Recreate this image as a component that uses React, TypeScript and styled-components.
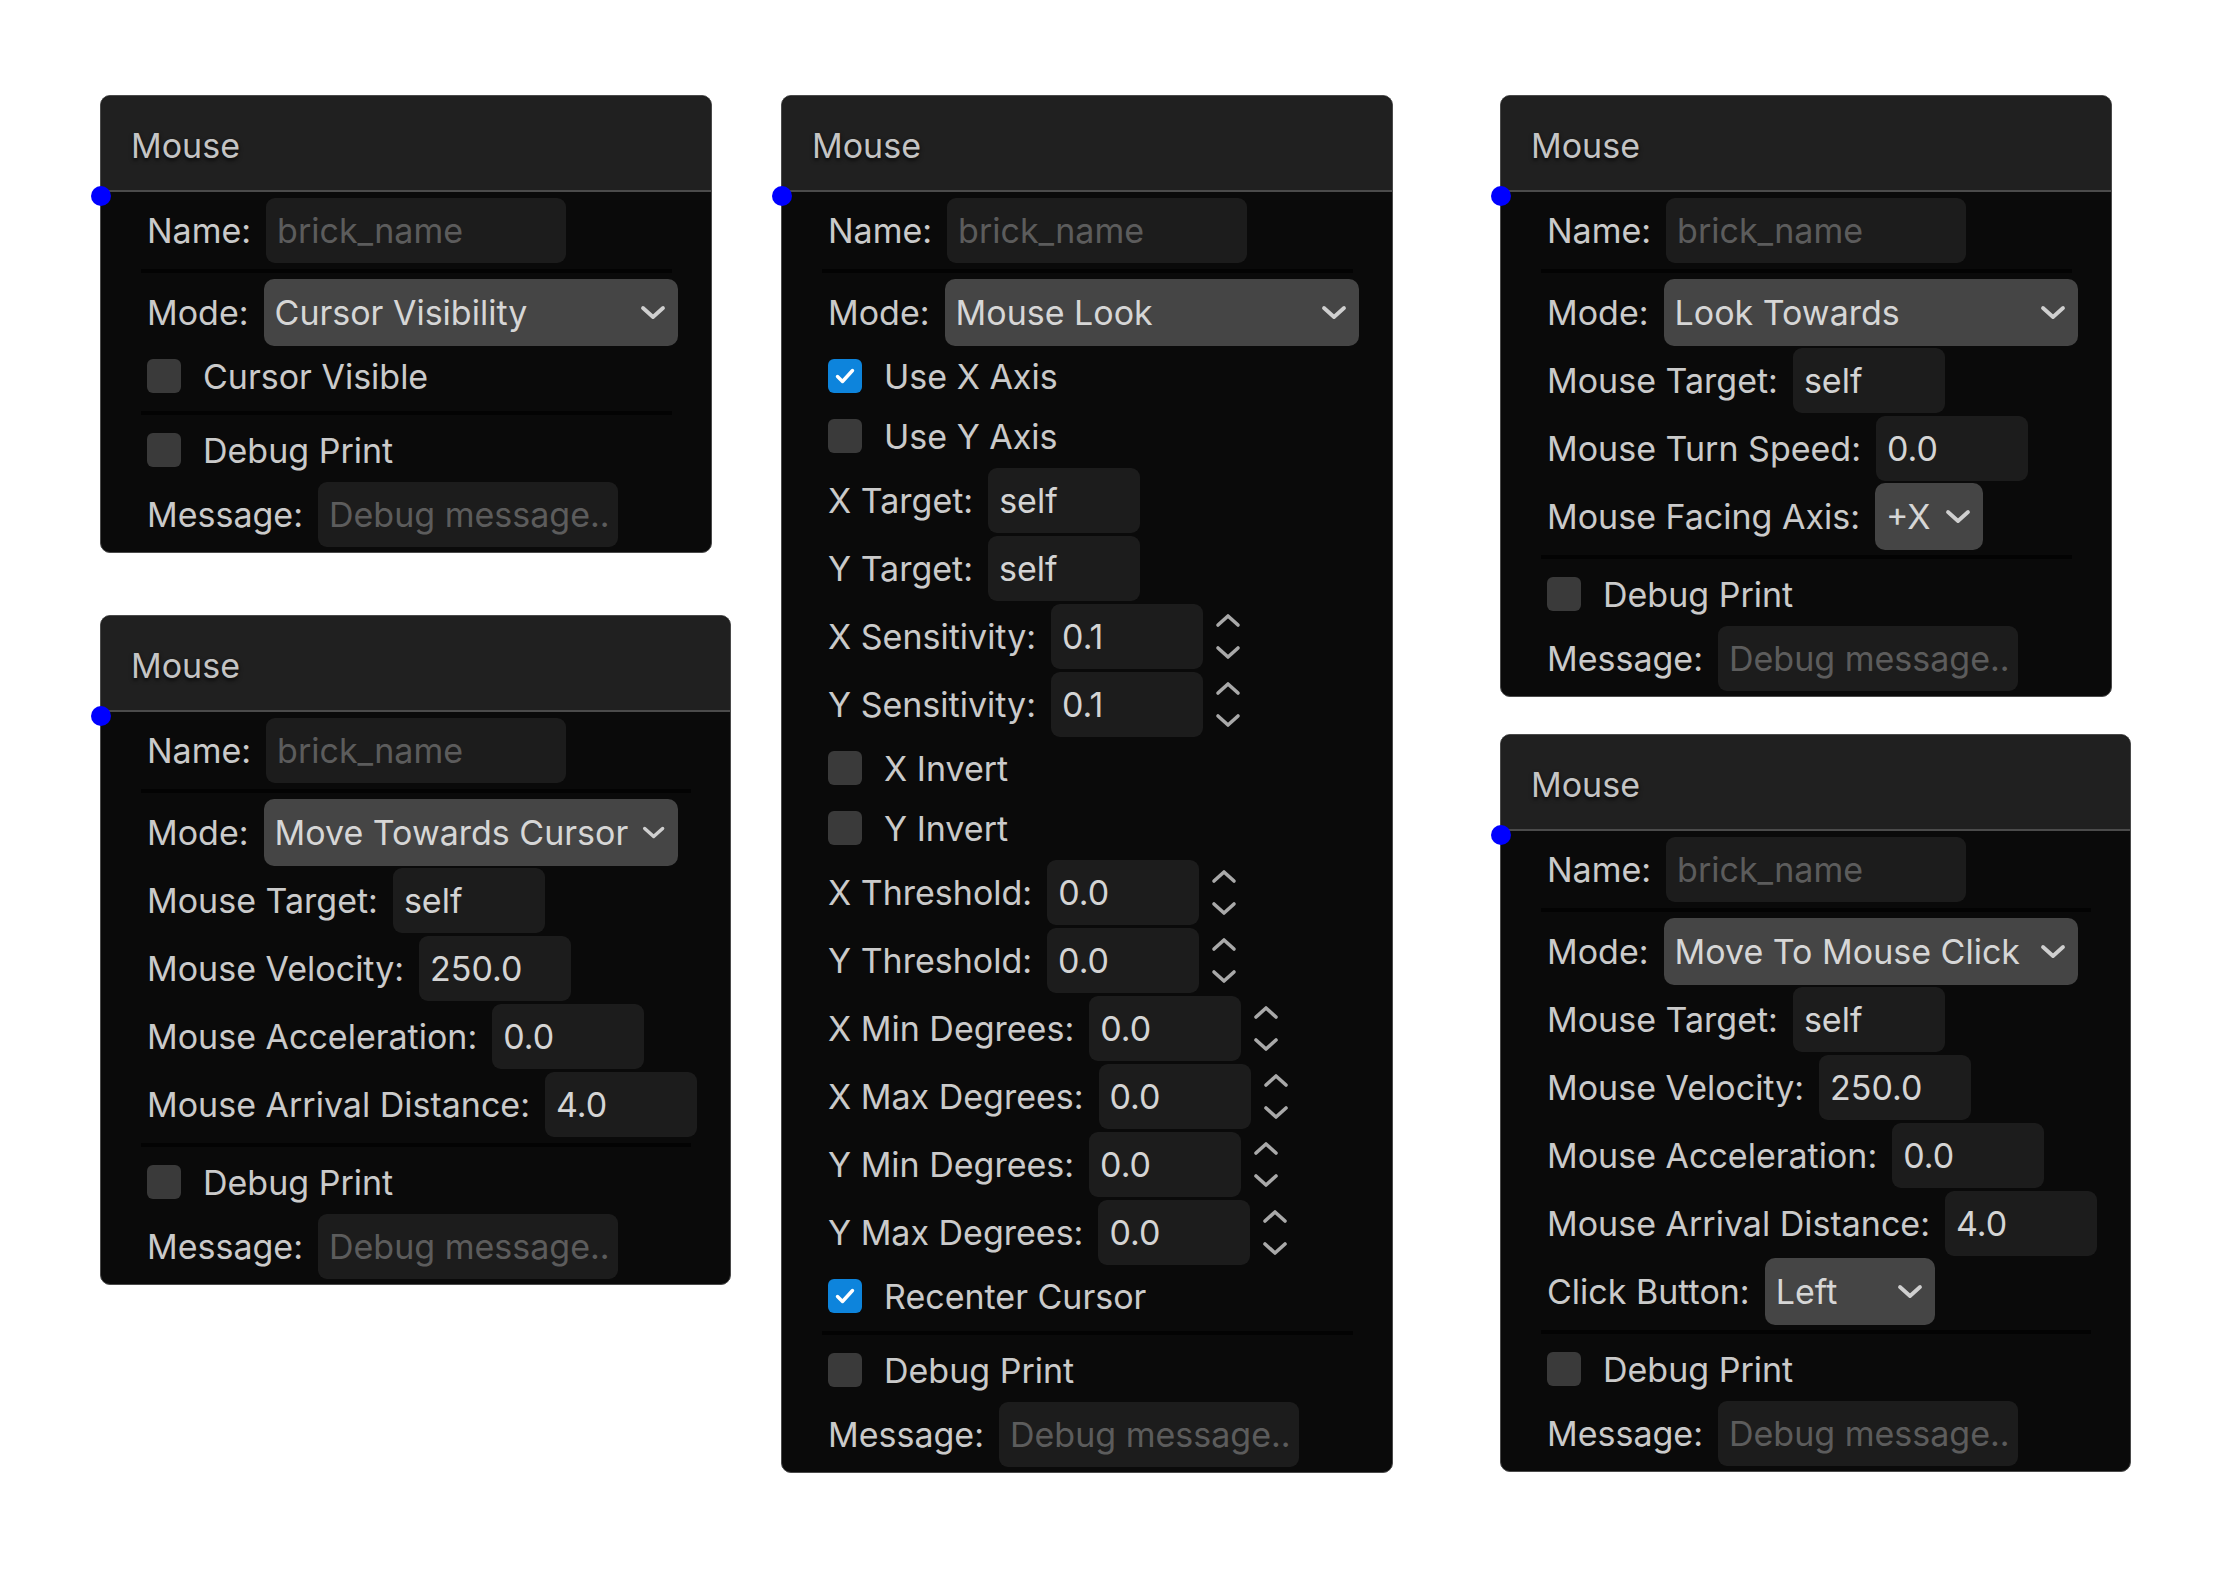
import styled, { createGlobalStyle } from "styled-components"

const GlobalStyle = createGlobalStyle`
    body {
        margin: 0;
        background: #ffffff;
        font-family: Inter, "Noto Sans", sans-serif;
    }
`

const Canvas = styled.div`
    display: grid;
    grid-template-columns: 681px 719px auto;
    align-items: start;
    padding: 95px 0 0 100px;
    min-height: 1576px;
    box-sizing: border-box;
`

const Column = styled.div<{ $gap: number }>`
    display: flex;
    flex-direction: column;
    align-items: flex-start;
    gap: ${p => p.$gap}px;
`

const Panel = styled.section`
    position: relative;
    width: fit-content;
    border: 1px solid #4a4a4a;
    border-radius: 10px;
    background: #0a0a0a;
`

// socket on the left edge of the brick
const Socket = styled.span`
    position: absolute;
    left: -10px;
    top: 90px;
    width: 20px;
    height: 20px;
    border-radius: 50%;
    background: #0000ff;
`

const Header = styled.header`
    height: 96px;
    box-sizing: border-box;
    display: flex;
    align-items: center;
    padding: 5px 30px 0;
    background: #202020;
    border-bottom: 2px solid #4b4b4b;
    border-radius: 9px 9px 0 0;
    color: #c4c4c4;
    font-size: 34px;
    text-shadow: 0 2px 4px rgba(0, 0, 0, 0.85);
`

const Body = styled.div`
    display: flex;
    flex-direction: column;
    padding: 4px 33px 4px 40px;
`

const Row = styled.div<{ $check?: boolean }>`
    display: flex;
    align-items: center;
    height: ${p => (p.$check ? 60 : 68)}px;
    padding-left: 6px;
    gap: ${p => (p.$check ? 22 : 15)}px;
`

const Divider = styled.hr`
    height: 4px;
    margin: 5px 6px 5px 0;
    border: none;
    background: #030303;
`

const Label = styled.span`
    color: #cacaca;
    font-size: 34px;
    white-space: nowrap;
`

const TextBox = styled.input<{ $w: number }>`
    width: ${p => p.$w}px;
    height: 65px;
    box-sizing: border-box;
    padding: 0 6px 0 11px;
    border: none;
    border-radius: 9px;
    background: #1c1c1c;
    color: #d4d4d4;
    font-family: inherit;
    font-size: 34px;
    outline: none;

    &::placeholder {
        color: #5c5c5c;
    }
`

const SelectBox = styled.div<{ $w?: number }>`
    width: ${p => (p.$w ? `${p.$w}px` : "auto")};
    height: 67px;
    box-sizing: border-box;
    display: flex;
    align-items: center;
    justify-content: space-between;
    gap: 14px;
    padding: 0 12px 0 11px;
    border-radius: 10px;
    background: #454545;
    color: #d6d6d6;
    font-size: 34px;
    white-space: nowrap;
`

const NumberField = styled.div`
    display: flex;
    align-items: center;
    gap: 12px;
`

const Spinner = styled.div`
    display: flex;
    flex-direction: column;
    gap: 17px;
`

const Box = styled.span<{ $on: boolean }>`
    width: 34px;
    height: 34px;
    flex-shrink: 0;
    display: flex;
    align-items: center;
    justify-content: center;
    border-radius: 6px;
    background: ${p => (p.$on ? "#0d84dc" : "#3a3a3a")};
`

const Chevron = () => (
    <svg width="26" height="15" viewBox="0 0 26 15">
        <path d="M3 3 L13 12 L23 3" fill="none" stroke="#cfcfcf" strokeWidth="3.8" strokeLinecap="round" strokeLinejoin="round" />
    </svg>
)

const Arrow = ({ up }: { up?: boolean }) => (
    <svg width="26" height="15" viewBox="0 0 26 15">
        <path d={up ? "M3 12 L13 3 L23 12" : "M3 3 L13 12 L23 3"} fill="none" stroke="#a9a9a9" strokeWidth="3.6" strokeLinecap="round" strokeLinejoin="round" />
    </svg>
)

type Field =
    | { kind: "divider" }
    | { kind: "name" }
    | { kind: "mode"; value: string }
    | { kind: "text"; label: string; value: string }
    | { kind: "number"; label: string; value: string }
    | { kind: "select"; label: string; value: string; width?: number }
    | { kind: "check"; label: string; on?: boolean }
    | { kind: "message" }

function FieldRow({ field }: { field: Field }) {
    switch (field.kind) {
        case "divider":
            return <Divider />
        case "name":
            return (
                <Row>
                    <Label>Name:</Label>
                    <TextBox $w={300} placeholder="brick_name" readOnly />
                </Row>
            )
        case "mode":
            return (
                <Row>
                    <Label>Mode:</Label>
                    <SelectBox $w={414}>
                        {field.value}
                        <Chevron />
                    </SelectBox>
                </Row>
            )
        case "text":
            return (
                <Row>
                    <Label>{field.label}</Label>
                    <TextBox $w={152} defaultValue={field.value} readOnly />
                </Row>
            )
        case "number":
            return (
                <Row>
                    <Label>{field.label}</Label>
                    <NumberField>
                        <TextBox $w={152} defaultValue={field.value} readOnly />
                        <Spinner>
                            <Arrow up />
                            <Arrow />
                        </Spinner>
                    </NumberField>
                </Row>
            )
        case "select":
            return (
                <Row>
                    <Label>{field.label}</Label>
                    <SelectBox $w={field.width}>
                        {field.value}
                        <Chevron />
                    </SelectBox>
                </Row>
            )
        case "check":
            return (
                <Row $check>
                    <Box $on={!!field.on}>
                        {field.on && (
                            <svg width="24" height="24" viewBox="0 0 24 24">
                                <path d="M4.5 12.5 L9.5 17.5 L19.5 6.5" fill="none" stroke="#ffffff" strokeWidth="3.4" strokeLinecap="round" strokeLinejoin="round" />
                            </svg>
                        )}
                    </Box>
                    <Label>{field.label}</Label>
                </Row>
            )
        case "message":
            return (
                <Row>
                    <Label>Message:</Label>
                    <TextBox $w={300} placeholder="Debug message.." readOnly />
                </Row>
            )
    }
}

const footer: Field[] = [
    { kind: "divider" },
    { kind: "check", label: "Debug Print" },
    { kind: "message" },
]

const head = (mode: string): Field[] => [
    { kind: "name" },
    { kind: "divider" },
    { kind: "mode", value: mode },
]

const cursorVisibility: Field[] = [
    ...head("Cursor Visibility"),
    { kind: "check", label: "Cursor Visible" },
    ...footer,
]

const moveTowardsCursor: Field[] = [
    ...head("Move Towards Cursor"),
    { kind: "text", label: "Mouse Target:", value: "self" },
    { kind: "text", label: "Mouse Velocity:", value: "250.0" },
    { kind: "text", label: "Mouse Acceleration:", value: "0.0" },
    { kind: "text", label: "Mouse Arrival Distance:", value: "4.0" },
    ...footer,
]

const mouseLook: Field[] = [
    ...head("Mouse Look"),
    { kind: "check", label: "Use X Axis", on: true },
    { kind: "check", label: "Use Y Axis" },
    { kind: "text", label: "X Target:", value: "self" },
    { kind: "text", label: "Y Target:", value: "self" },
    { kind: "number", label: "X Sensitivity:", value: "0.1" },
    { kind: "number", label: "Y Sensitivity:", value: "0.1" },
    { kind: "check", label: "X Invert" },
    { kind: "check", label: "Y Invert" },
    { kind: "number", label: "X Threshold:", value: "0.0" },
    { kind: "number", label: "Y Threshold:", value: "0.0" },
    { kind: "number", label: "X Min Degrees:", value: "0.0" },
    { kind: "number", label: "X Max Degrees:", value: "0.0" },
    { kind: "number", label: "Y Min Degrees:", value: "0.0" },
    { kind: "number", label: "Y Max Degrees:", value: "0.0" },
    { kind: "check", label: "Recenter Cursor", on: true },
    ...footer,
]

const lookTowards: Field[] = [
    ...head("Look Towards"),
    { kind: "text", label: "Mouse Target:", value: "self" },
    { kind: "text", label: "Mouse Turn Speed:", value: "0.0" },
    { kind: "select", label: "Mouse Facing Axis:", value: "+X" },
    ...footer,
]

const moveToClick: Field[] = [
    ...head("Move To Mouse Click"),
    { kind: "text", label: "Mouse Target:", value: "self" },
    { kind: "text", label: "Mouse Velocity:", value: "250.0" },
    { kind: "text", label: "Mouse Acceleration:", value: "0.0" },
    { kind: "text", label: "Mouse Arrival Distance:", value: "4.0" },
    { kind: "select", label: "Click Button:", value: "Left", width: 170 },
    ...footer,
]

function MouseBrick({ fields }: { fields: Field[] }) {
    return (
        <Panel>
            <Header>Mouse</Header>
            <Socket />
            <Body>
                {fields.map((f, i) => (
                    <FieldRow key={i} field={f} />
                ))}
            </Body>
        </Panel>
    )
}

export default function App() {
    return (
        <>
            <GlobalStyle />
            <Canvas>
                <Column $gap={62}>
                    <MouseBrick fields={cursorVisibility} />
                    <MouseBrick fields={moveTowardsCursor} />
                </Column>
                <Column $gap={0}>
                    <MouseBrick fields={mouseLook} />
                </Column>
                <Column $gap={37}>
                    <MouseBrick fields={lookTowards} />
                    <MouseBrick fields={moveToClick} />
                </Column>
            </Canvas>
        </>
    )
}
